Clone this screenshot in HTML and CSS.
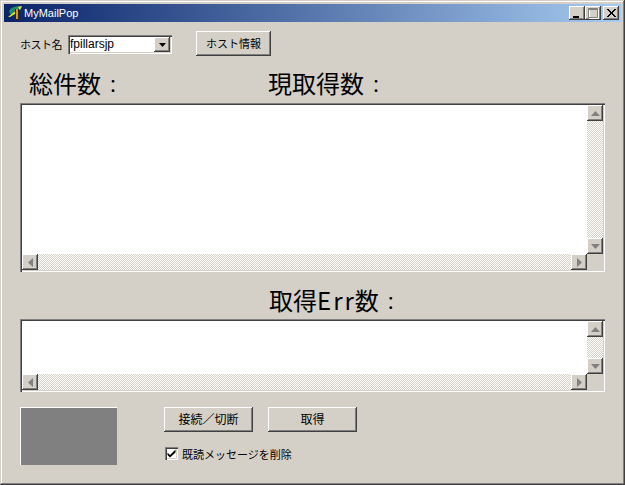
FILE: index.html
```html
<!DOCTYPE html>
<html lang="ja">
<head>
<meta charset="utf-8">
<title>MyMailPop</title>
<link rel="stylesheet" href="styles.css">
</head>
<body>
<div class="window">
  <div class="titlebar">
    <svg class="app-icon" width="16" height="16" viewBox="0 0 16 16">
      <path d="M2 6 Q4 1 15 1 L13 5 L11 4 L7 6 L5 9 L3 9 Z" fill="#1c8f66"/>
      <path d="M1 12 L7 7 L9 5 L8 9 L3 12 Z" fill="#dfe62a"/>
      <path d="M11 2 L15 1 L13 5 Z" fill="#e8e040"/>
      <rect x="8" y="4" width="4" height="11" fill="#3a2508"/>
      <rect x="9" y="4" width="2" height="10" fill="#d09a30"/>
    </svg>
    <span class="title-text">MyMailPop</span>
    <div class="caption-buttons">
      <button class="cap-btn"><svg width="14" height="12" viewBox="0 0 14 12"><rect x="3" y="9" width="6" height="2" fill="#000"/></svg></button>
      <button class="cap-btn"><svg width="14" height="12" viewBox="0 0 14 12"><path d="M3.5 2.5h9v9h-9z" fill="none" stroke="#fff"/><path d="M2.5 1.5h9v9h-9z M2 2.5h10" fill="none" stroke="#808080"/></svg></button>
      <button class="cap-btn cap-close"><svg width="14" height="12" viewBox="0 0 14 12"><path d="M3 2l8 8M4 2l8 8M11 2l-8 8M12 2l-8 8" stroke="#000" fill="none"/></svg></button>
    </div>
  </div>

  <div class="content">
    <div class="host-row">
      <label class="host-label">ホスト名</label>
      <div class="combo">
        <span class="combo-value">fpillarsjp</span>
        <span class="btn3d combo-arrow"><svg width="7" height="4" viewBox="0 0 7 4"><path d="M0 0h7L3.5 4z" fill="#000"/></svg></span>
      </div>
      <button class="btn3d push host-info">ホスト情報</button>
    </div>

    <div class="counts-row">
      <span class="big total">総件数<span class="colon">：</span></span>
      <span class="big">現取得数<span class="colon">：</span></span>
    </div>

    <div class="listbox listbox-main">
      <div class="list-white"></div>
      <div class="vscroll">
        <span class="btn3d sb"><svg width="9" height="5" viewBox="0 0 9 5"><path d="M4.5 0L9 5H0z" fill="#808080"/></svg></span>
        <span class="btn3d sb"><svg width="9" height="5" viewBox="0 0 9 5"><path d="M0 0h9L4.5 5z" fill="#808080"/></svg></span>
      </div>
      <div class="hscroll">
        <span class="btn3d sb"><svg width="5" height="9" viewBox="0 0 5 9"><path d="M5 0v9L0 4.5z" fill="#808080"/></svg></span>
        <span class="btn3d sb"><svg width="5" height="9" viewBox="0 0 5 9"><path d="M0 0v9L5 4.5z" fill="#808080"/></svg></span>
      </div>
      <div class="corner"></div>
    </div>

    <div class="err-row">
      <span class="big">取得<span class="latin">Err</span>数<span class="colon">：</span></span>
    </div>

    <div class="listbox listbox-err">
      <div class="list-white"></div>
      <div class="vscroll">
        <span class="btn3d sb"><svg width="9" height="5" viewBox="0 0 9 5"><path d="M4.5 0L9 5H0z" fill="#808080"/></svg></span>
        <span class="btn3d sb"><svg width="9" height="5" viewBox="0 0 9 5"><path d="M0 0h9L4.5 5z" fill="#808080"/></svg></span>
      </div>
      <div class="hscroll">
        <span class="btn3d sb"><svg width="5" height="9" viewBox="0 0 5 9"><path d="M5 0v9L0 4.5z" fill="#808080"/></svg></span>
        <span class="btn3d sb"><svg width="5" height="9" viewBox="0 0 5 9"><path d="M0 0v9L5 4.5z" fill="#808080"/></svg></span>
      </div>
      <div class="corner"></div>
    </div>

    <div class="bottom-row">
      <div class="status-box"></div>
      <div class="actions">
        <div class="action-buttons">
          <button class="btn3d push action">接続／切断</button>
          <button class="btn3d push action">取得</button>
        </div>
        <label class="check-row">
          <span class="checkbox"><svg width="9" height="9" viewBox="0 0 9 9"><path d="M0.5 3.5l2.5 2.5L8.5 0.5v3L3 8.5 0.5 6z" fill="#000"/></svg></span>
          <span class="check-text">既読メッセージを削除</span>
        </label>
      </div>
    </div>
  </div>
</div>
</body>
</html>
```
FILE: styles.css
```css
* { box-sizing: border-box; }
html, body { margin: 0; padding: 0; }
body {
  font-family: "Noto Sans CJK JP", "Liberation Sans", sans-serif;
  font-size: 12px;
  color: #000;
  background: #d4d0c8;
}
.window {
  width: 625px;
  height: 485px;
  padding: 4px;
  background: #d4d0c8;
  overflow: hidden;
  box-shadow: inset -1px -1px 0 #404040, inset 1px 1px 0 #d4d0c8, inset -2px -2px 0 #808080, inset 2px 2px 0 #fff;
}
.titlebar {
  display: flex;
  align-items: center;
  height: 18px;
  padding: 0 2px 0 3px;
  background: linear-gradient(90deg, #0a246a, #a6caf0);
  color: #fff;
}
.app-icon { flex: none; }
.title-text {
  margin-left: 1px;
  font-family: "Liberation Sans", sans-serif;
  font-size: 11px;
}
.caption-buttons { display: flex; margin-left: auto; }
.cap-btn {
  width: 16px;
  height: 14px;
  padding: 0;
  border: 0;
  display: flex;
  align-items: center;
  justify-content: center;
  background: #d4d0c8;
  box-shadow: inset -1px -1px 0 #404040, inset 1px 1px 0 #fff, inset -2px -2px 0 #808080;
}
.cap-close { margin-left: 2px; }
.content { padding-left: 16px; }
.btn3d {
  background: #d4d0c8;
  box-shadow: inset -1px -1px 0 #404040, inset 1px 1px 0 #fff, inset -2px -2px 0 #808080;
  display: flex;
  align-items: center;
  justify-content: center;
}
.push {
  border: 0;
  padding: 0 0 2px;
  font: inherit;
  color: #000;
  height: 25px;
}
.host-row {
  display: flex;
  margin-top: 9px;
  height: 25px;
}
.host-label {
  width: 48px;
  margin-top: 5px;
  font-size: 11px;
  letter-spacing: -0.5px;
  white-space: nowrap;
}
.combo {
  display: flex;
  justify-content: space-between;
  align-items: stretch;
  width: 104px;
  height: 19px;
  margin-top: 4px;
  padding: 2px;
  background: #fff;
  box-shadow: inset 1px 1px 0 #808080, inset 2px 2px 0 #404040, inset -1px -1px 0 #fff, inset -2px -2px 0 #d4d0c8;
}
.combo-value {
  font-family: "Liberation Sans", sans-serif;
  font-size: 12px;
  line-height: 15px;
}
.combo-arrow { width: 16px; }
.host-info {
  width: 75px;
  margin-left: 24px;
  font-size: 11px;
}
.counts-row {
  display: flex;
  height: 47px;
  padding-top: 12px;
  padding-left: 9px;
}
.big { font-size: 24px; line-height: 30px; white-space: nowrap; }
.colon { font-size: 18px; padding: 0 3px; }
.latin { letter-spacing: 2px; margin-right: -1px; }
.total { width: 239px; }
.listbox {
  display: grid;
  grid-template-columns: 1fr 16px;
  grid-template-rows: 1fr 16px;
  width: 585px;
  padding: 2px;
  box-shadow: inset 1px 1px 0 #808080, inset 2px 2px 0 #404040, inset -1px -1px 0 #fff, inset -2px -2px 0 #d4d0c8;
}
.listbox-main { height: 169px; }
.listbox-err { height: 73px; }
.list-white { background: #fff; }
.vscroll, .hscroll {
  display: flex;
  justify-content: space-between;
  background-color: #fff;
  background-image: conic-gradient(#d4d0c8 25%, #fff 0 50%, #d4d0c8 0 75%, #fff 0);
  background-size: 2px 2px;
}
.vscroll { flex-direction: column; }
.sb { width: 16px; height: 16px; }
.corner { background: #d4d0c8; }
.err-row {
  height: 47px;
  padding-top: 13px;
  padding-left: 249px;
}
.bottom-row { display: flex; margin-top: 15px; }
.status-box {
  width: 97px;
  height: 58px;
  background: #808080;
  box-shadow: inset 1px 1px 0 #fff;
}
.actions { margin-left: 47px; }
.action-buttons { display: flex; gap: 15px; }
.action { width: 89px; }
.check-row {
  display: flex;
  align-items: center;
  gap: 4px;
  margin-top: 13px;
  margin-left: 1px;
  height: 17px;
}
.check-text { font-size: 11px; }
.checkbox {
  display: flex;
  align-items: center;
  justify-content: center;
  width: 13px;
  height: 13px;
  background: #fff;
  box-shadow: inset 1px 1px 0 #808080, inset 2px 2px 0 #404040, inset -1px -1px 0 #fff, inset -2px -2px 0 #d4d0c8;
}
```
